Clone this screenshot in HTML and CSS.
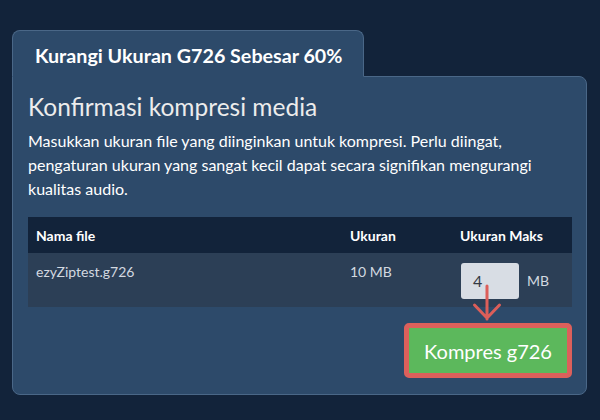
FILE: index.html
```html
<!DOCTYPE html>
<html lang="id">
<head>
<meta charset="utf-8">
<title>Kurangi Ukuran G726</title>
<link rel="stylesheet" href="styles.css">
</head>
<body>
<div class="page">
  <div class="panel">
    <div class="tab">Kurangi Ukuran G726 Sebesar 60%</div>
    <div class="card">
      <h2 class="heading">Konfirmasi kompresi media</h2>
      <p class="desc">Masukkan ukuran file yang diinginkan untuk kompresi. Perlu diingat, pengaturan ukuran yang sangat kecil dapat secara signifikan mengurangi kualitas audio.</p>
      <div class="table">
        <div class="row head">
          <div class="cell c1">Nama file</div>
          <div class="cell c2">Ukuran</div>
          <div class="cell c3">Ukuran Maks</div>
        </div>
        <div class="row data">
          <div class="cell c1">ezyZiptest.g726</div>
          <div class="cell c2">10 MB</div>
          <div class="cell c3">
            <div class="size">
              <div class="input">4</div>
              <span class="unit">MB</span>
            </div>
          </div>
        </div>
        <svg class="arrow" width="32" height="40" viewBox="0 0 32 40">
          <path d="M16 2 V35 M3.5 21 L16 34 L28.5 21" fill="none" stroke="#dc5e59" stroke-width="3" stroke-linecap="round" stroke-linejoin="round"/>
        </svg>
      </div>
      <div class="actions">
        <button class="btn">Kompres g726</button>
      </div>
    </div>
  </div>
</div>
</body>
</html>
```

FILE: styles.css
```css
html, body {
  margin: 0;
  padding: 0;
}
body {
  background: #12233a;
  font-family: Lato, "Noto Sans", "DejaVu Sans", sans-serif;
  width: 600px;
  height: 420px;
  overflow: hidden;
}
.page {
  padding: 30px 13px 0 12px;
}
.panel {
  display: flex;
  flex-direction: column;
  align-items: flex-start;
  width: 575px;
}
.tab {
  position: relative;
  z-index: 1;
  box-sizing: border-box;
  width: 352px;
  height: 47px;
  margin-bottom: -1px;
  padding: 12px 0 0 22px;
  background: #2d4a6a;
  border: 1px solid #4a6787;
  border-bottom: 1px solid #2d4a6a;
  border-radius: 8px 8px 0 0;
  color: #ffffff;
  font-weight: 700;
  font-size: 19.7px;
  line-height: 25px;
  white-space: nowrap;
}
.card {
  box-sizing: border-box;
  width: 575px;
  background: #2d4a6a;
  border: 1px solid #4a6787;
  border-radius: 0 8px 8px 8px;
  padding: 15px 14px 16px 15px;
}
.heading {
  margin: 0 0 7px 0;
  font-weight: 400;
  font-size: 24.5px;
  line-height: 30px;
  color: #ececec;
}
.desc {
  margin: 0 0 16px 0;
  font-size: 16px;
  line-height: 24px;
  color: #ffffff;
}
.table {
  position: relative;
  width: 544px;
}
.row {
  display: grid;
  grid-template-columns: 314px 110px 120px;
}
.row.head {
  background: #12233a;
  height: 36px;
  align-items: center;
  color: #ffffff;
  font-weight: 700;
  font-size: 14px;
}
.row.data {
  background: #2c3f56;
  height: 54px;
  color: #d3d9e0;
  font-size: 14px;
  line-height: 18px;
}
.cell {
  padding: 0 8px;
}
.row.data .cell {
  padding: 10px 8px 8px 8px;
}
.row.data .c3 {
  padding-left: 9px;
}
.size {
  display: flex;
  align-items: center;
}
.input {
  box-sizing: border-box;
  width: 58px;
  height: 36px;
  background: #d8dde4;
  border-radius: 3px;
  padding-left: 12px;
  color: #333a44;
  font-size: 16px;
  font-weight: 400;
  line-height: 36px;
}
.unit {
  margin-left: 8px;
  color: #d3d9e0;
  font-size: 14px;
}
.arrow {
  position: absolute;
  left: 443px;
  top: 67px;
}
.actions {
  display: flex;
  justify-content: flex-end;
  margin-top: 16px;
  width: 544px;
}
.btn {
  box-sizing: border-box;
  width: 168px;
  height: 55px;
  background: #5cb85c;
  border: 5px solid #dc605b;
  border-radius: 5px;
  color: #ffffff;
  font-family: Lato, "Noto Sans", sans-serif;
  font-size: 20px;
  font-weight: 400;
  padding: 0;
}
```
